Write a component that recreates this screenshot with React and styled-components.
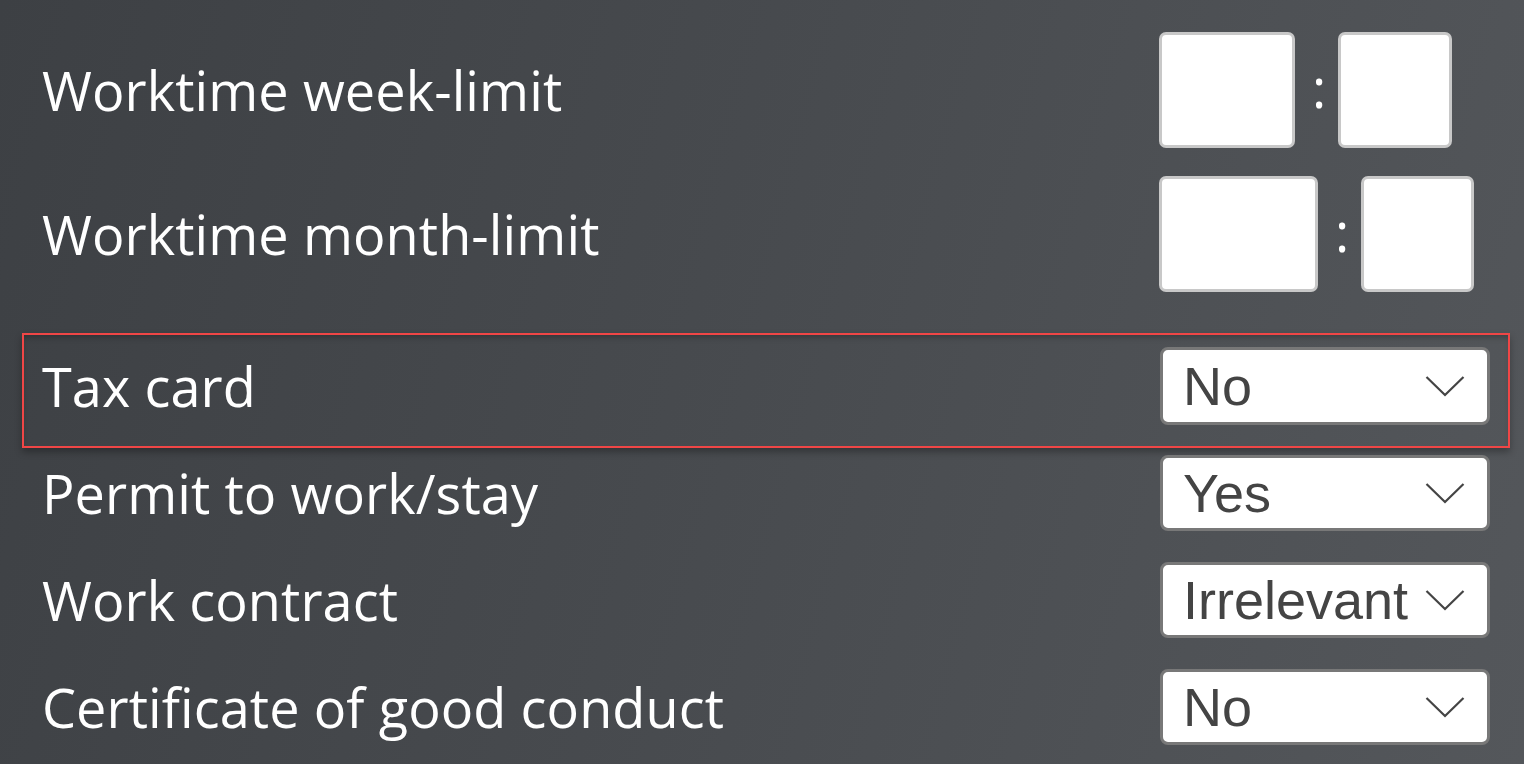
import React from 'react';
import styled, { createGlobalStyle } from 'styled-components';

const GlobalStyle = createGlobalStyle`
  html, body {
    margin: 0;
    padding: 0;
  }
  body {
    width: 1524px;
    height: 764px;
    overflow: hidden;
    background: linear-gradient(105deg, #3d4044 0%, #474a4e 45%, #54575b 100%);
  }
`;

const Form = styled.div`
  display: flex;
  flex-direction: column;
  padding: 30px 14px 0 22px;
  font-family: 'Open Sans', sans-serif;
`;

const Row = styled.div`
  display: flex;
  align-items: center;
  padding-left: 18px;
  margin-top: ${p => p.$gap || 0}px;
  border: 2px solid ${p => (p.$active ? '#f04646' : 'transparent')};
  padding-top: ${p => (p.$active ? 12 : 0)}px;
  padding-bottom: ${p => (p.$active ? 21 : 0)}px;
  box-shadow: ${p =>
    p.$active
      ? 'inset 0 5px 6px -3px rgba(0,0,0,0.28), 0 4px 7px rgba(0,0,0,0.3)'
      : 'none'};
`;

const Label = styled.div`
  width: ${p => p.$w || 1118}px;
  flex-shrink: 0;
  color: #ffffff;
  font-size: 54px;
  line-height: 1;
  letter-spacing: 0.1px;
`;

const TimeGroup = styled.div`
  display: flex;
  align-items: center;
  gap: 17px;
`;

const TimeBox = styled.div`
  box-sizing: border-box;
  width: ${p => p.$w}px;
  height: 116px;
  background: #ffffff;
  border: 3px solid #c8c8c8;
  border-radius: 7px;
`;

const Colon = styled.span`
  color: #ffffff;
  font-size: 54px;
  line-height: 1;
  width: 9px;
  text-align: center;
  margin-top: -6px;
`;

const Select = styled.div`
  box-sizing: border-box;
  width: 330px;
  height: ${p => p.$h || 77}px;
  background: #ffffff;
  border: 3px solid #787878;
  border-radius: 8px;
  display: flex;
  align-items: center;
  justify-content: space-between;
  padding: 0 22px 0 20px;
  font-family: 'Liberation Sans', Arial, sans-serif;
  font-size: 54px;
  color: #444444;
`;

const Chevron = () => (
  <svg width="40" height="22" viewBox="0 0 40 22" fill="none">
    <path d="M1.5 2 L20 20 L38.5 2" stroke="#444" strokeWidth="2.2" />
  </svg>
);

const rows = [
  { label: 'Permit to work/stay', value: 'Yes', gap: 5 },
  { label: 'Work contract', value: 'Irrelevant', gap: 27 },
  { label: 'Certificate of good conduct', value: 'No', gap: 27 },
];

const App = () => (
  <>
    <GlobalStyle />
    <Form>
      <Row>
        <Label $w={1117}>Worktime week-limit</Label>
        <TimeGroup>
          <TimeBox $w={136} />
          <Colon>:</Colon>
          <TimeBox $w={114} />
        </TimeGroup>
      </Row>
      <Row $gap={24}>
        <Label $w={1117}>Worktime month-limit</Label>
        <TimeGroup>
          <TimeBox $w={159} />
          <Colon>:</Colon>
          <TimeBox $w={113} />
        </TimeGroup>
      </Row>
      <Row $gap={39} $active>
        <Label>Tax card</Label>
        <Select $h={78}>
          No
          <Chevron />
        </Select>
      </Row>
      {rows.map(r => (
        <Row key={r.label} $gap={r.gap}>
          <Label>{r.label}</Label>
          <Select $h={76}>
            {r.value}
            <Chevron />
          </Select>
        </Row>
      ))}
    </Form>
  </>
);

export default App;
